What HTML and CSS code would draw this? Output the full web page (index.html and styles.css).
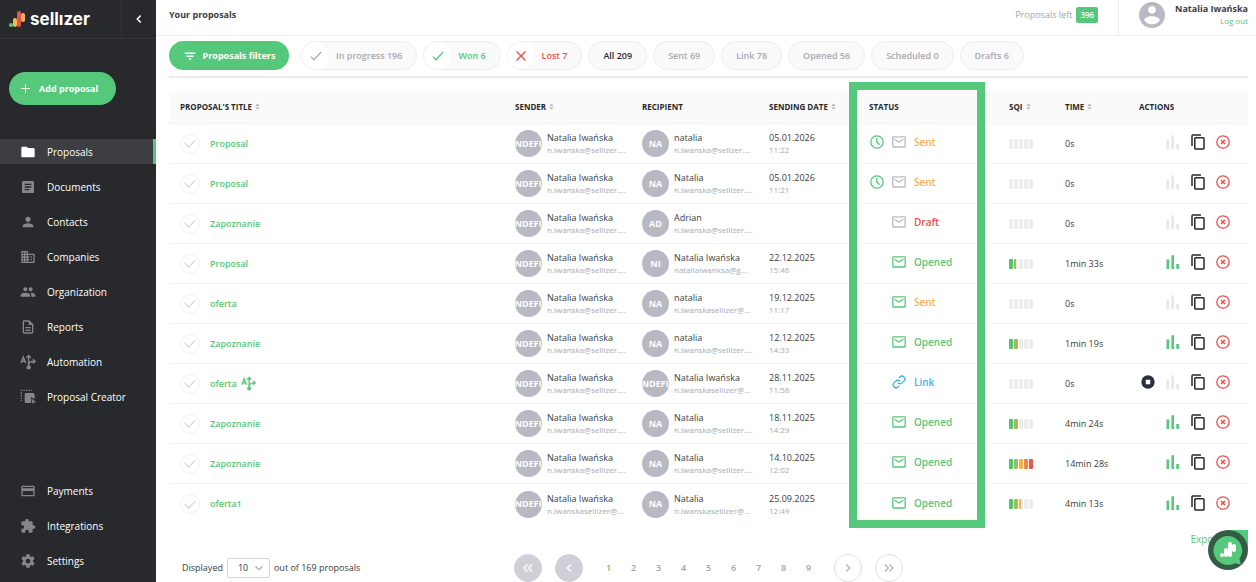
FILE: index.html
```
<!DOCTYPE html>
<html lang="en">
<head>
    <meta charset="UTF-8">
    <meta name="viewport" content="width=device-width, initial-scale=1.0">
    <title>Your proposals - Sellizer</title>
    <link rel="stylesheet" href="styles.css">
</head>
<body>
    <svg class="sprite" aria-hidden="true">
        <symbol id="i-check" viewBox="0 0 24 24"><path d="M3 13l5.500 5.500L21 5" fill="none" stroke="currentColor" stroke-width="2.200"/></symbol>
        <symbol id="i-cross" viewBox="0 0 24 24"><path d="M3 3l18 18M21 3L3 21" fill="none" stroke="currentColor" stroke-width="2.800"/></symbol>
        <symbol id="i-left" viewBox="0 0 24 24"><path d="M15 6l-6 6 6 6" fill="none" stroke="currentColor" stroke-width="2.600"/></symbol>
        <symbol id="i-right" viewBox="0 0 24 24"><path d="M9 6l6 6-6 6" fill="none" stroke="currentColor" stroke-width="2.600"/></symbol>
        <symbol id="i-first" viewBox="0 0 24 24"><path d="M11 6l-6 6 6 6M19 6l-6 6 6 6" fill="none" stroke="currentColor" stroke-width="2.400"/></symbol>
        <symbol id="i-last" viewBox="0 0 24 24"><path d="M5 6l6 6-6 6M13 6l6 6-6 6" fill="none" stroke="currentColor" stroke-width="2.400"/></symbol>
        <symbol id="i-filter" viewBox="0 0 24 24"><path d="M10 18.500h4V16h-4v2.500zM3 6v2.500h18V6H3zm3 7.500h12V11H6v2.500z" fill="currentColor"/></symbol>
        <symbol id="i-sort" viewBox="0 0 8 10"><path d="M4 0l3.500 4h-7zM4 10l3.500-4h-7z" fill="currentColor"/></symbol>
        <symbol id="i-folder" viewBox="0 0 24 24"><path d="M10 4H4c-1.100 0-2 .9-2 2v12c0 1.100.9 2 2 2h16c1.100 0 2-.9 2-2V8c0-1.100-.9-2-2-2h-8l-2-2z" fill="currentColor"/></symbol>
        <symbol id="i-article" viewBox="0 0 24 24"><path d="M19 3H5c-1.100 0-2 .9-2 2v14c0 1.100.9 2 2 2h14c1.100 0 2-.9 2-2V5c0-1.100-.9-2-2-2zm-5 14H7v-2h7v2zm3-4H7v-2h10v2zm0-4H7V7h10v2z" fill="currentColor"/></symbol>
        <symbol id="i-person" viewBox="0 0 24 24"><path d="M12 12c2.210 0 4-1.790 4-4s-1.790-4-4-4-4 1.790-4 4 1.790 4 4 4zm0 2c-2.670 0-8 1.340-8 4v2h16v-2c0-2.660-5.330-4-8-4z" fill="currentColor"/></symbol>
        <symbol id="i-company" viewBox="0 0 24 24"><path d="M12 7V3H2v18h20V7H12zM6 19H4v-2h2v2zm0-4H4v-2h2v2zm0-4H4V9h2v2zm0-4H4V5h2v2zm4 12H8v-2h2v2zm0-4H8v-2h2v2zm0-4H8V9h2v2zm0-4H8V5h2v2zm10 12h-8v-2h2v-2h-2v-2h2v-2h-2V9h8v10zm-2-8h-2v2h2v-2zm0 4h-2v2h2v-2z" fill="currentColor"/></symbol>
        <symbol id="i-group" viewBox="0 0 24 24"><path d="M16 11c1.660 0 2.990-1.340 2.990-3S17.660 5 16 5s-3 1.340-3 3 1.340 3 3 3zm-8 0c1.660 0 2.990-1.340 2.990-3S9.660 5 8 5 5 6.340 5 8s1.340 3 3 3zm0 2c-2.330 0-7 1.170-7 3.500V19h14v-2.500C15 14.170 10.330 13 8 13zm8 0c-.29 0-.62.02-.97.05 1.160.84 1.970 1.970 1.970 3.450V19h6v-2.500c0-2.330-4.670-3.500-7-3.500z" fill="currentColor"/></symbol>
        <symbol id="i-report" viewBox="0 0 24 24"><path d="M8 16h8v2H8zm0-4h8v2H8zm6-10H6c-1.100 0-2 .9-2 2v16c0 1.100.89 2 1.990 2H18c1.100 0 2-.9 2-2V8l-6-6zm4 18H6V4h7v5h5v11z" fill="currentColor"/></symbol>
        <symbol id="i-auto" viewBox="0 0 24 24"><g fill="none" stroke="currentColor" stroke-width="2.200"><path d="M1.500 14L5 4.500 8.500 14M2.800 11h4.400"/><path d="M13 19V3M9.800 5.500L13 2.200l3.200 3.300M13 17c0-4 3-6 9-6M19.500 7.800L22.500 11l-3 3.200"/></g><circle cx="13" cy="20" r="3.300" fill="currentColor"/></symbol>
        <symbol id="i-creator" viewBox="0 0 24 24"><path d="M1 2h17M2 1v17" fill="none" stroke="currentColor" stroke-width="2" stroke-dasharray="2 2"/><path d="M9 6h10a3 3 0 0 1 3 3v6l-6-3 1 9H9a2 2 0 0 1-2-2V8a2 2 0 0 1 2-2z" fill="currentColor"/><path d="M17 14l7 6-3.500.4L19 23z" fill="currentColor"/></symbol>
        <symbol id="i-card" viewBox="0 0 24 24"><path d="M20 4H4c-1.110 0-1.990.89-1.990 2L2 18c0 1.110.89 2 2 2h16c1.110 0 2-.89 2-2V6c0-1.110-.89-2-2-2zm0 14H4v-6h16v6zm0-10H4V6h16v2z" fill="currentColor"/></symbol>
        <symbol id="i-puzzle" viewBox="0 0 24 24"><path d="M20.500 11H19V7c0-1.100-.9-2-2-2h-4V3.500C13 2.120 11.880 1 10.500 1S8 2.120 8 3.500V5H4c-1.100 0-1.990.9-1.990 2v3.800H3.500c1.490 0 2.700 1.210 2.700 2.700s-1.210 2.700-2.700 2.700H2V20c0 1.100.9 2 2 2h3.800v-1.500c0-1.490 1.210-2.700 2.700-2.700 1.490 0 2.700 1.210 2.700 2.700V22H17c1.100 0 2-.9 2-2v-4h1.500c1.380 0 2.500-1.120 2.500-2.500S21.880 11 20.500 11z" fill="currentColor"/></symbol>
        <symbol id="i-gear" viewBox="0 0 24 24"><path d="M19.430 12.980c.04-.32.07-.64.07-.98s-.03-.66-.07-.98l2.110-1.650c.19-.15.24-.42.12-.64l-2-3.460c-.12-.22-.39-.3-.61-.22l-2.490 1c-.52-.4-1.080-.73-1.690-.98l-.38-2.650C14.460 2.180 14.250 2 14 2h-4c-.25 0-.46.18-.49.42l-.38 2.650c-.61.25-1.170.59-1.690.98l-2.490-1c-.23-.09-.49 0-.61.22l-2 3.460c-.13.22-.07.49.12.64l2.110 1.650c-.04.32-.07.65-.07.98s.03.66.07.98l-2.110 1.650c-.19.15-.24.42-.12.64l2 3.460c.12.22.39.3.61.22l2.490-1c.52.4 1.080.73 1.690.98l.38 2.650c.03.24.24.42.49.42h4c.25 0 .46-.18.49-.42l.38-2.650c.61-.25 1.170-.59 1.690-.98l2.490 1c.23.09.49 0 .61-.22l2-3.460c.12-.22.07-.49-.12-.64l-2.110-1.650zM12 15.500c-1.930 0-3.500-1.570-3.500-3.500s1.570-3.500 3.500-3.500 3.500 1.570 3.500 3.500-1.570 3.500-3.500 3.500z" fill="currentColor"/></symbol>
        <symbol id="i-account" viewBox="2 2 20 20"><path d="M12 2C6.480 2 2 6.480 2 12s4.480 10 10 10 10-4.480 10-10S17.520 2 12 2zm0 3c1.660 0 3 1.340 3 3s-1.340 3-3 3-3-1.340-3-3 1.340-3 3-3zm0 14.200c-2.500 0-4.710-1.280-6-3.220.03-1.990 4-3.080 6-3.080 1.990 0 5.970 1.090 6 3.080-1.290 1.940-3.500 3.220-6 3.220z" fill="currentColor"/></symbol>
        <symbol id="i-clock" viewBox="0 0 14 14"><g fill="none" stroke="currentColor" stroke-width="1.300"><circle cx="7" cy="7" r="6.200"/><path d="M6.800 3v4.200l2.700 2.600"/></g></symbol>
        <symbol id="i-mail" viewBox="0 0 14 14"><g fill="none" stroke="currentColor" stroke-width="1.300"><rect x=".8" y="1.800" width="12.400" height="10.200" rx=".8"/><path d="M2.500 4.300L7 7l4.500-2.700"/></g></symbol>
        <symbol id="i-link" viewBox="0 0 24 24"><path d="M10 13a5 5 0 0 0 7.540.54l3-3a5 5 0 0 0-7.070-7.070l-1.720 1.710M14 11a5 5 0 0 0-7.540-.54l-3 3a5 5 0 0 0 7.070 7.070l1.710-1.710" fill="none" stroke="currentColor" stroke-width="2.200"/></symbol>
        <symbol id="i-stop" viewBox="0 0 14 14"><circle cx="7" cy="7" r="6.700" fill="currentColor"/><rect x="4.800" y="4.800" width="4.400" height="4.400" rx=".5" fill="#fff"/></symbol>
        <symbol id="i-chart" viewBox="0 0 14 14"><path d="M.5 4.500h2.600V14H.5zM5.400.3H8V14H5.400zM10.300 9h2.600v5h-2.600z" fill="currentColor"/></symbol>
        <symbol id="i-copy" viewBox="0 0 14 16"><g fill="none" stroke="currentColor" stroke-width="1.500"><path d="M1 12V1.800Q1 1 1.800 1H10"/><rect x="3.800" y="3.800" width="9.200" height="11.200" rx=".8"/></g></symbol>
        <symbol id="i-delete" viewBox="0 0 14 14"><circle cx="7" cy="7" r="6.200" fill="none" stroke="currentColor" stroke-width="1.300"/><path d="M5 5l4 4M9 5L5 9" stroke="currentColor" stroke-width="1.600"/></symbol>
    </svg>

    <aside class="sidebar">
        <div class="brand">
            <a href="#" class="logo">
                <svg width="17" height="17" viewBox="0 0 17 17" aria-hidden="true">
                    <rect x="0" y="12" width="4" height="4" rx="2" fill="#4fce7b"/>
                    <rect x="4" y="7" width="4" height="9" rx="2" fill="#f7b64b"/>
                    <rect x="8" y="0" width="4" height="16" rx="2" fill="#ea5050"/>
                    <rect x="12" y="2" width="4" height="9" rx="2" fill="#f7b64b"/>
                </svg>
                <span>sellızer</span>
            </a>
            <button class="collapse" aria-label="Collapse menu"><svg class="icon"><use href="#i-left"/></svg></button>
        </div>
        <button class="add-btn"><span class="plus" aria-hidden="true"></span>Add proposal</button>
        <nav>
            <ul class="menu">
                <li><a href="#" class="active"><svg><use href="#i-folder"/></svg>Proposals</a></li>
                <li><a href="#"><svg><use href="#i-article"/></svg>Documents</a></li>
                <li><a href="#"><svg><use href="#i-person"/></svg>Contacts</a></li>
                <li><a href="#"><svg><use href="#i-company"/></svg>Companies</a></li>
                <li><a href="#"><svg><use href="#i-group"/></svg>Organization</a></li>
                <li><a href="#"><svg><use href="#i-report"/></svg>Reports</a></li>
                <li><a href="#"><svg><use href="#i-auto"/></svg>Automation</a></li>
                <li><a href="#"><svg><use href="#i-creator"/></svg>Proposal Creator</a></li>
            </ul>
            <ul class="menu menu-bottom">
                <li><a href="#"><svg><use href="#i-card"/></svg>Payments</a></li>
                <li><a href="#"><svg><use href="#i-puzzle"/></svg>Integrations</a></li>
                <li><a href="#"><svg><use href="#i-gear"/></svg>Settings</a></li>
            </ul>
        </nav>
    </aside>

    <div class="page">
        <header class="topbar">
            <h1>Your proposals</h1>
            <div class="left-count">Proposals left <span class="count">396</span></div>
            <div class="user">
                <svg class="user-icon"><use href="#i-account"/></svg>
                <div class="user-text">
                    <strong>Natalia Iwańska</strong>
                    <a href="#">Log out</a>
                </div>
            </div>
        </header>

        <main>
            <div class="filters">
                <button class="filter-main"><svg class="icon"><use href="#i-filter"/></svg>Proposals filters</button>
                <button class="pill with-icon"><span class="pill-icon"><svg class="icon"><use href="#i-check"/></svg></span>In progress 196</button>
                <button class="pill with-icon won"><span class="pill-icon"><svg class="icon"><use href="#i-check"/></svg></span>Won 6</button>
                <button class="pill with-icon lost"><span class="pill-icon"><svg class="icon-sm"><use href="#i-cross"/></svg></span>Lost 7</button>
                <button class="pill all">All 209</button>
                <button class="pill">Sent 69</button>
                <button class="pill">Link 78</button>
                <button class="pill">Opened 56</button>
                <button class="pill">Scheduled 0</button>
                <button class="pill">Drafts 6</button>
            </div>

            <div class="table-wrap">
                <table>
                    <thead>
                        <tr>
                            <th class="col-title">PROPOSAL'S TITLE <svg class="sort"><use href="#i-sort"/></svg></th>
                            <th class="col-person">SENDER <svg class="sort"><use href="#i-sort"/></svg></th>
                            <th class="col-person">RECIPIENT</th>
                            <th class="col-date">SENDING DATE <svg class="sort"><use href="#i-sort"/></svg></th>
                            <th class="col-status">STATUS</th>
                            <th class="col-sqi">SQI <svg class="sort"><use href="#i-sort"/></svg></th>
                            <th class="col-time">TIME <svg class="sort"><use href="#i-sort"/></svg></th>
                            <th class="col-actions">ACTIONS</th>
                        </tr>
                    </thead>
                    <tbody id="rows"></tbody>
                </table>
                <div class="highlight"></div>
            </div>

            <div class="export"><a href="#">Export</a></div>

            <div class="footer">
                <div class="per-page">
                    <label for="per-page">Displayed</label>
                    <span class="select">
                        <select id="per-page"><option>10</option><option>25</option><option>50</option></select>
                        <svg class="icon"><use href="#i-right"/></svg>
                    </span>
                    <span>out of 169 proposals</span>
                </div>
                <div class="pager">
                    <button class="round filled" aria-label="First page"><svg class="icon"><use href="#i-first"/></svg></button>
                    <button class="round filled" aria-label="Previous page"><svg class="icon"><use href="#i-left"/></svg></button>
                    <div class="numbers">
                        <a href="#" class="current">1</a><a href="#">2</a><a href="#">3</a><a href="#">4</a><a href="#">5</a><a href="#">6</a><a href="#">7</a><a href="#">8</a><a href="#">9</a>
                    </div>
                    <button class="round" aria-label="Next page"><svg class="icon"><use href="#i-right"/></svg></button>
                    <button class="round" aria-label="Last page"><svg class="icon"><use href="#i-last"/></svg></button>
                </div>
            </div>
        </main>
    </div>

    <button class="chat" aria-label="Open chat">
        <svg width="40" height="40" viewBox="0 0 40 40" aria-hidden="true">
            <path d="M20 0h20v20z" fill="#55c87b"/>
            <circle cx="20" cy="20" r="20" fill="#345c45"/>
            <path d="M20 6a14.500 14.500 0 1 0 7 27.200l6 1.300-1.700-5.500A14.500 14.500 0 0 0 20 6z" fill="#55c87b"/>
            <g fill="#fff">
                <rect x="12" y="23" width="4" height="4" rx="2"/>
                <rect x="16" y="18" width="4" height="9" rx="2"/>
                <rect x="20" y="12" width="4" height="15" rx="2"/>
                <rect x="24" y="14" width="4" height="8" rx="2"/>
            </g>
        </svg>
    </button>

    <script>
        const me = ['UNDEFIN', 'Natalia Iwańska', 'n.iwanska@sellizer....'];
        const proposals = [
            { title: 'Proposal', from: me, to: ['NA', 'natalia', 'n.iwanska@selizer....'], date: '05.01.2026', hour: '11:22', status: 'Sent', clock: true, mail: 'gray', sqi: 0, time: '0s' },
            { title: 'Proposal', from: me, to: ['NA', 'Natalia', 'n.iwanska@sellizer....'], date: '05.01.2026', hour: '11:21', status: 'Sent', clock: true, mail: 'gray', sqi: 0, time: '0s' },
            { title: 'Zapoznanie', from: me, to: ['AD', 'Adrian', 'n.iwanska@sellizer....'], date: '', hour: '', status: 'Draft', mail: 'gray', sqi: 0, time: '0s' },
            { title: 'Proposal', from: me, to: ['NI', 'Natalia Iwańska', 'nataliaiwanksa@g...'], date: '22.12.2025', hour: '15:46', status: 'Opened', mail: 'green', sqi: 1.5, time: '1min 33s' },
            { title: 'oferta', from: me, to: ['NA', 'natalia', 'n.iwanskasellizer@...'], date: '19.12.2025', hour: '11:17', status: 'Sent', mail: 'green', sqi: 0, time: '0s' },
            { title: 'Zapoznanie', from: me, to: ['NA', 'natalia', 'n.iwanska@sellizer....'], date: '12.12.2025', hour: '14:33', status: 'Opened', mail: 'green', sqi: 2, time: '1min 19s' },
            { title: 'oferta', auto: true, from: me, to: ['UNDEFIN', 'Natalia Iwańska', 'n.iwanskasellizer@...'], date: '28.11.2025', hour: '11:58', status: 'Link', sqi: 0, time: '0s', stop: true },
            { title: 'Zapoznanie', from: me, to: ['NA', 'Natalia', 'n.iwanska@sellizer....'], date: '18.11.2025', hour: '14:29', status: 'Opened', mail: 'green', sqi: 2, time: '4min 24s' },
            { title: 'Zapoznanie', from: me, to: ['NA', 'Natalia', 'n.iwanska@sellizer....'], date: '14.10.2025', hour: '12:02', status: 'Opened', mail: 'green', sqi: 5, time: '14min 28s' },
            { title: 'oferta1', from: ['UNDEFIN', 'Natalia Iwańska', 'n.iwanskasellizer@...'], to: ['NA', 'Natalia', 'n.iwanskasellizer@...'], date: '25.09.2025', hour: '12:49', status: 'Opened', mail: 'green', sqi: 2.4, time: '4min 13s' }
        ];

        const icon = (name, cls = 'icon') => `<svg class="${cls}"><use href="#i-${name}"/></svg>`;

        const person = p => `
            <div class="person">
                <span class="avatar">${p[0]}</span>
                <div><div class="name">${p[1]}</div><div class="sub">${p[2]}</div></div>
            </div>`;

        const sqi = value => [0, 1, 2, 3, 4].map(i => {
            const fill = Math.max(0, Math.min(1, value - i)) * 100;
            return `<span class="bar"><i style="width:${fill}%"></i></span>`;
        }).join('');

        document.getElementById('rows').innerHTML = proposals.map(p => `
            <tr>
                <td class="col-title"><div class="title">
                    <input type="checkbox" aria-label="Select ${p.title}">
                    <a href="#">${p.title}</a>${p.auto ? icon('auto', 'auto') : ''}
                </div></td>
                <td>${person(p.from)}</td>
                <td>${person(p.to)}</td>
                <td><div class="name">${p.date}</div><div class="sub">${p.hour}</div></td>
                <td><div class="status ${p.status.toLowerCase()}">
                    <span class="slot">${p.clock ? icon('clock', 'icon green') : ''}</span>
                    ${p.mail ? icon('mail', 'icon ' + p.mail) : icon('link')}
                    <span>${p.status}</span>
                </div></td>
                <td><div class="sqi">${sqi(p.sqi)}</div></td>
                <td class="time">${p.time}</td>
                <td><div class="actions">
                    ${p.stop ? `<button class="stop" aria-label="Stop">${icon('stop')}</button>` : ''}
                    <button class="chart ${p.sqi ? 'on' : ''}" aria-label="Statistics">${icon('chart')}</button>
                    <button class="copy" aria-label="Copy">${icon('copy', 'icon-tall')}</button>
                    <button class="delete" aria-label="Delete">${icon('delete')}</button>
                </div></td>
            </tr>`).join('');
    </script>
</body>
</html>
```
FILE: styles.css
```
* {
    box-sizing: border-box;
}
body {
    display: grid;
    grid-template-columns: 156px 1fr;
    min-height: 100vh;
    margin: 0;
    font-family: "Open Sans", "Noto Sans", sans-serif;
    font-size: 10px;
    line-height: 12px;
    color: #3b3c40;
    background: #fff;
}
button {
    padding: 0;
    border: none;
    background: none;
    font: inherit;
    color: inherit;
    cursor: pointer;
}
a {
    color: inherit;
    text-decoration: none;
}
svg {
    flex: none;
}
.sprite {
    position: absolute;
    width: 0;
    height: 0;
}
.icon {
    width: 14px;
    height: 14px;
}
.icon-sm {
    width: 12px;
    height: 12px;
}
.icon-tall {
    width: 14px;
    height: 16px;
}
.green {
    color: #55c87b;
}
.gray {
    color: #b9b9c3;
}

/* sidebar */
.sidebar {
    background: #27292c;
    color: #fff;
}
.brand {
    display: flex;
    height: 39px;
    border-bottom: 1px solid #333539;
}
.logo {
    display: flex;
    flex: 1;
    align-items: center;
    gap: 4px;
    padding-left: 9px;
    font-family: Inter, sans-serif;
    font-size: 17px;
    font-weight: 700;
    line-height: 20px;
}
.collapse {
    display: flex;
    align-items: center;
    justify-content: center;
    width: 35px;
    border-left: 1px solid #333539;
}
.add-btn {
    display: flex;
    align-items: center;
    gap: 9px;
    width: 107px;
    height: 33px;
    margin: 33px 0 34px 9px;
    padding-left: 12px;
    border-radius: 17px;
    background: #55c87b;
    font-size: 9px;
    font-weight: 700;
}
.plus {
    width: 9px;
    height: 9px;
    background: linear-gradient(#fff, #fff) center / 9px 1px no-repeat, linear-gradient(#fff, #fff) center / 1px 9px no-repeat;
}
.menu {
    display: flex;
    flex-direction: column;
    gap: 10px;
    margin: 0;
    padding: 0;
    list-style: none;
}
.menu-bottom {
    margin-top: 69px;
}
.menu a {
    display: flex;
    align-items: center;
    gap: 11px;
    height: 25px;
    padding-left: 20px;
}
.menu svg {
    width: 16px;
    height: 16px;
    color: #85868a;
}
.menu .active {
    background: #3d3e41;
    border-right: 3px solid #55c87b;
}
.menu .active svg {
    color: #fff;
}

/* top bar */
.page {
    min-width: 0;
}
.topbar {
    display: flex;
    align-items: center;
    height: 36px;
    padding: 0 8px 0 13px;
    border-bottom: 1px solid #efeff2;
}
h1 {
    flex: 1;
    margin: 0 0 6px;
    font-size: 9px;
    font-weight: 700;
    line-height: 12px;
}
.left-count {
    display: flex;
    align-items: center;
    gap: 4px;
    margin: 0 20px 6px 0;
    font-size: 9px;
    color: #a3a3ae;
}
.count {
    padding: 2px 4px;
    border-radius: 2px;
    background: #55c87b;
    color: #fff;
    font-size: 8px;
    font-weight: 600;
}
.user {
    display: flex;
    gap: 10px;
    height: 35px;
    padding: 2px 0 0 20px;
    border-left: 1px solid #efeff2;
}
.user-icon {
    width: 26px;
    height: 26px;
    color: #b9b9c3;
}
.user-text {
    display: flex;
    flex-direction: column;
    padding-top: 1px;
    text-align: right;
}
.user-text strong {
    font-size: 9px;
    font-weight: 700;
}
.user-text a {
    font-size: 8px;
    color: #55c87b;
}

main {
    padding: 5px 8px 0 13px;
}

/* filters */
.filters {
    display: flex;
    gap: 6px;
    padding-bottom: 6px;
    border-bottom: 2px solid #ebebf0;
    font-size: 9px;
}
.filter-main {
    display: flex;
    align-items: center;
    justify-content: center;
    gap: 6px;
    width: 120px;
    height: 29px;
    margin-right: 6px;
    border-radius: 15px;
    background: #55c87b;
    color: #fff;
    font-weight: 700;
}
.pill {
    display: flex;
    align-items: center;
    height: 29px;
    padding: 0 14px;
    border: 1px solid #ededef;
    border-radius: 15px;
    background: #fafafa;
    color: #a9a9b3;
    font-weight: 600;
}
.with-icon {
    gap: 7px;
    padding-left: 0;
}
.pill-icon {
    display: flex;
    align-items: center;
    justify-content: center;
    width: 27px;
    height: 27px;
    border-radius: 50%;
    background: #fff;
}
.won {
    color: #55c87b;
}
.lost {
    color: #ea5050;
}
.all {
    color: #27292c;
}

/* table */
.table-wrap {
    position: relative;
    margin-top: 13px;
}
table {
    width: 100%;
    table-layout: fixed;
    border-collapse: separate;
    border-spacing: 0;
}
th {
    height: 33px;
    padding: 0;
    background: #fafafa;
    border-bottom: 1px solid #f3f3f4;
    font-size: 8px;
    font-weight: 700;
    text-align: left;
    color: #27292c;
    white-space: nowrap;
}
td {
    height: 40px;
    padding: 0;
    border-bottom: 1px solid #f3f3f4;
}
tbody tr:last-child td {
    border-bottom: none;
}
.sort {
    width: 5px;
    height: 7px;
    margin-left: 1px;
    color: #b9b9c3;
}
.col-title {
    padding-left: 11px;
}
.col-person {
    width: 127px;
}
.col-date {
    width: 100px;
}
.col-status {
    width: 140px;
}
.col-sqi {
    width: 56px;
}
.col-time {
    width: 74px;
}
.col-actions {
    width: 109px;
}
.title {
    display: flex;
    align-items: center;
    gap: 10px;
    font-size: 9px;
    font-weight: 600;
    color: #55c87b;
}
.title input {
    display: flex;
    align-items: center;
    justify-content: center;
    width: 20px;
    height: 20px;
    margin: 0;
    border: 1px solid #f0f0f2;
    border-radius: 50%;
    appearance: none;
}
.title input::after {
    content: "";
    width: 9px;
    height: 5px;
    margin-bottom: 3px;
    border: solid #ccccd4;
    border-width: 0 0 1px 1px;
    transform: rotate(-45deg);
}
.auto {
    width: 15px;
    height: 15px;
    margin-left: -6px;
}
.person {
    display: flex;
    align-items: center;
    gap: 5px;
}
.avatar {
    display: flex;
    align-items: center;
    justify-content: center;
    flex: none;
    width: 27px;
    height: 27px;
    border-radius: 50%;
    background: #b9b9c3;
    overflow: hidden;
    color: #fff;
    font-size: 9px;
    font-weight: 700;
}
.name {
    font-size: 9px;
    white-space: nowrap;
}
.sub {
    font-size: 8px;
    line-height: 11px;
    color: #a9a9b3;
    white-space: nowrap;
}
.status {
    display: flex;
    align-items: center;
    gap: 8px;
    padding: 0 0 3px 1px;
    font-weight: 600;
}
.slot {
    width: 14px;
    height: 14px;
}
.sent {
    color: #f9b055;
}
.draft {
    color: #ea5050;
}
.opened {
    color: #55c87b;
}
.link {
    color: #43b4d8;
}
.sqi {
    display: flex;
    gap: 1px;
}
.bar {
    width: 4px;
    height: 10px;
    border-radius: 1px;
    background: #ededee;
    overflow: hidden;
}
.bar i {
    display: block;
    height: 100%;
    background: #55c46f;
}
.bar:nth-child(2) i {
    background: #9dbf5a;
}
.bar:nth-child(3) i {
    background: #f2b24c;
}
.bar:nth-child(4) i {
    background: #f08546;
}
.bar:nth-child(5) i {
    background: #e8564c;
}
.time {
    font-size: 9px;
}
.actions {
    display: flex;
    align-items: center;
    justify-content: flex-end;
    gap: 11px;
    padding: 0 18px 3px 0;
}
.actions button {
    display: flex;
}
.stop {
    color: #2b303b;
}
.chart {
    color: #e6e6eb;
}
.chart.on {
    color: #55c87b;
}
.copy {
    color: #27292c;
}
.delete {
    color: #ea5050;
}

/* frame around the status column */
.highlight {
    position: absolute;
    top: -9px;
    right: 263px;
    bottom: -4px;
    width: 136px;
    border: 8px solid #55c87b;
    pointer-events: none;
}

.export {
    padding: 9px 27px 0 0;
    text-align: right;
    color: #55c87b;
}

/* footer */
.footer {
    display: grid;
    grid-template-columns: 332px 1fr;
    align-items: center;
    margin-top: 9px;
    padding-left: 13px;
}
.per-page {
    display: flex;
    align-items: center;
    gap: 4px;
    font-size: 9px;
}
.select {
    position: relative;
}
.select select {
    width: 43px;
    height: 20px;
    padding: 0 0 0 10px;
    border: 1px solid #d5d5dd;
    border-radius: 2px;
    background: #fff;
    color: #3b3c40;
    font: inherit;
    appearance: none;
}
.select svg {
    position: absolute;
    top: 3px;
    right: 4px;
    color: #b9b9c3;
    transform: rotate(90deg);
    pointer-events: none;
}
.pager {
    display: flex;
    align-items: center;
    gap: 13px;
}
.round {
    display: flex;
    align-items: center;
    justify-content: center;
    width: 28px;
    height: 28px;
    border: 1px solid #dfdfe5;
    border-radius: 50%;
    color: #b9b9c3;
}
.filled {
    border-color: #cfcfd7;
    background: #cfcfd7;
    color: #fff;
}
.numbers {
    display: flex;
}
.numbers a {
    width: 25px;
    text-align: center;
    font-size: 9px;
    font-weight: 600;
    color: #a3a3ae;
}
.numbers .current {
    color: #55c87b;
}

.chat {
    position: fixed;
    right: 8px;
    bottom: 12px;
    height: 40px;
}
```
